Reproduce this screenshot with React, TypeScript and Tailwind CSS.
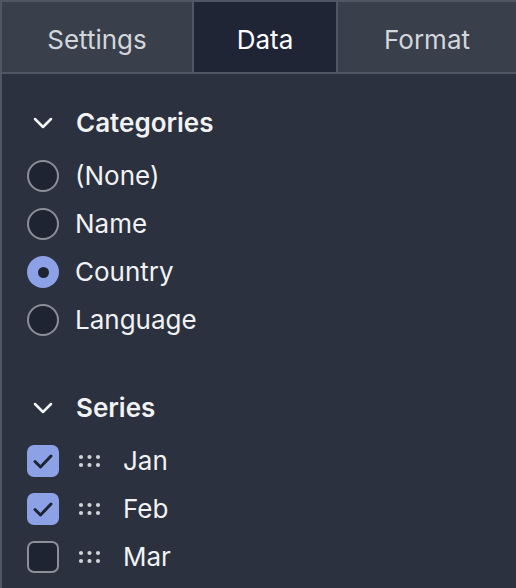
import React, { useState } from 'react';

const tabs = [
  { id: 'settings', label: 'Settings', width: 'w-[192px] border-r-2' },
  { id: 'data', label: 'Data', width: 'w-[144px] border-r-2' },
  { id: 'format', label: 'Format', width: 'flex-1' }
];

const categories = ['(None)', 'Name', 'Country', 'Language'];

const Chevron = () => (
  <svg width="20" height="12" viewBox="0 0 20 12" fill="none">
    <polyline points="2,2 10,10 18,2" stroke="#f3f4f6" strokeWidth="2.5" strokeLinecap="round" strokeLinejoin="round" />
  </svg>
);

const DragDots = () => (
  <svg width="26" height="14" viewBox="0 0 26 14">
    {[5, 13.5, 22].map(x =>
      [3, 11].map(y => <circle key={`${x}-${y}`} cx={x} cy={y} r="2.1" fill="#d0d3d8" />)
    )}
  </svg>
);

const CheckMark = () => (
  <svg width="20" height="15" viewBox="0 0 20 15" fill="none">
    <polyline points="2,7.5 7.5,13 18,2" stroke="#1e2433" strokeWidth="3" strokeLinecap="round" strokeLinejoin="round" />
  </svg>
);

export default function App() {
  const [activeTab, setActiveTab] = useState('data');
  const [category, setCategory] = useState('Country');
  const [series, setSeries] = useState([
    { name: 'Jan', checked: true },
    { name: 'Feb', checked: true },
    { name: 'Mar', checked: false }
  ]);

  const toggleSeries = (name: string) => {
    setSeries(prev => prev.map(s => (s.name === name ? { ...s, checked: !s.checked } : s)));
  };

  return (
    <div
      className="w-[516px] h-[588px] overflow-hidden bg-[#2b313e] border-l-2 border-t-2 border-[#4f5664] text-[26px] leading-none text-[#f1f2f4]"
      style={{ fontFamily: 'Inter, "Noto Sans", sans-serif' }}
    >
      {/* tab bar */}
      <div className="flex h-[72px] border-b-2 border-[#4f5664]">
        {tabs.map(tab => (
          <button
            key={tab.id}
            onClick={() => setActiveTab(tab.id)}
            className={`${tab.width} border-[#4f5664] flex items-center justify-center pt-[6px] ${
              activeTab === tab.id ? 'bg-[#1f2535] text-white' : 'bg-[#393f4b] text-[#d3d6db]'
            }`}
          >
            {tab.label}
          </button>
        ))}
      </div>

      <div className="pl-[25px]">
        {/* Categories */}
        <div className="mt-[25px] h-12 flex items-center">
          <div className="w-[49px] pl-[6px] flex items-center">
            <Chevron />
          </div>
          <span className="font-semibold">Categories</span>
        </div>
        <div className="mt-[5px]">
          {categories.map(c => (
            <label key={c} className="h-12 flex items-center cursor-pointer" onClick={() => setCategory(c)}>
              {category === c ? (
                <span className="w-8 h-8 rounded-full bg-[#8ca1e6] flex items-center justify-center">
                  <span className="w-[11px] h-[11px] rounded-full bg-[#1f2433]" />
                </span>
              ) : (
                <span className="w-8 h-8 rounded-full border-2 border-[#8b8f97] bg-[#1f2433]" />
              )}
              <span className="ml-[16px]">{c}</span>
            </label>
          ))}
        </div>

        {/* Series */}
        <div className="mt-10 h-12 flex items-center">
          <div className="w-[49px] pl-[6px] flex items-center">
            <Chevron />
          </div>
          <span className="font-semibold">Series</span>
        </div>
        <div className="mt-[5px]">
          {series.map(s => (
            <div key={s.name} className="h-12 flex items-center cursor-pointer" onClick={() => toggleSeries(s.name)}>
              {s.checked ? (
                <span className="w-8 h-8 rounded-[7px] bg-[#8ca1e6] flex items-center justify-center">
                  <CheckMark />
                </span>
              ) : (
                <span className="w-8 h-8 rounded-[7px] border-2 border-[#8b8f97] bg-[#1f2433]" />
              )}
              <span className="ml-[17px] flex items-center">
                <DragDots />
              </span>
              <span className="ml-[21px]">{s.name}</span>
            </div>
          ))}
        </div>
      </div>
    </div>
  );
}
